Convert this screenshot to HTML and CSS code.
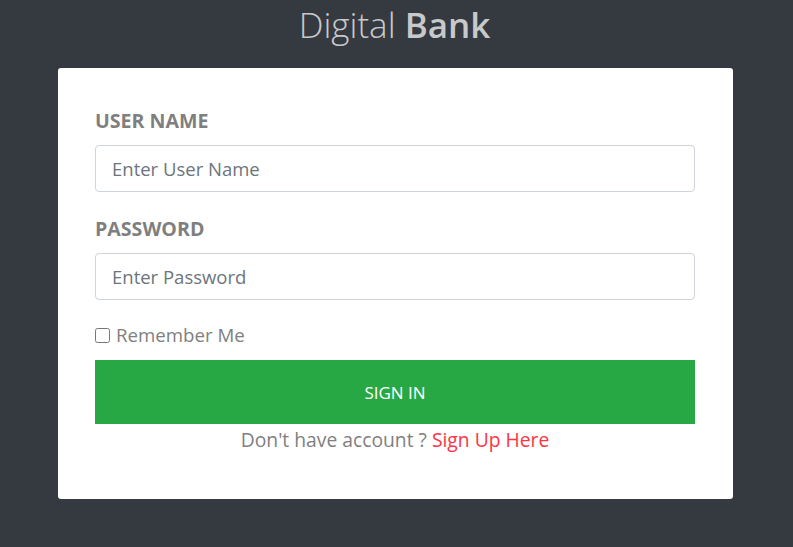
FILE: index.html
```html
<!DOCTYPE html>
<html>
<head>
<meta charset="utf-8">
<link rel="stylesheet" href="styles.css">
</head>
<body>
<div class="page">
  <h1 class="brand">Digital <b>Bank</b></h1>
  <div class="card">
    <form class="form">
      <label class="label" for="u">USER NAME</label>
      <input class="input" id="u" type="text" placeholder="Enter User Name">
      <label class="label label-2" for="p">PASSWORD</label>
      <input class="input" id="p" type="password" placeholder="Enter Password">
      <label class="remember"><input type="checkbox" class="check"> Remember Me</label>
      <button type="button" class="btn">SIGN IN</button>
      <p class="signup">Don't have account ? <a href="#" class="link">Sign Up Here</a></p>
    </form>
  </div>
</div>
</body>
</html>
```
FILE: styles.css
```css
html, body {
  margin: 0;
  padding: 0;
  background: #343a40;
  font-family: "Open Sans", "Noto Sans", sans-serif;
}
.page {
  display: flex;
  flex-direction: column;
  align-items: flex-start;
}
.brand {
  align-self: center;
  margin: 2px 4px 0 0;
  height: 66px;
  font-size: 35px;
  font-weight: 300;
  color: #c8c9cb;
  line-height: 46px;
}
.brand b {
  font-weight: 600;
}
.card {
  margin-left: 58px;
  width: 675px;
  background: #fff;
  border-radius: 3px;
  box-sizing: border-box;
  padding: 40px 38px 46px 37px;
}
.form {
  display: flex;
  flex-direction: column;
}
.label {
  font-size: 19.6px;
  font-weight: 700;
  color: #7f7f7f;
  line-height: 26px;
  margin-bottom: 11px;
}
.label-2 {
  margin-top: 24px;
}
.input {
  height: 47px;
  box-sizing: border-box;
  border: 1px solid #ced4da;
  border-radius: 4px;
  padding: 0 16px;
  font-family: inherit;
  font-size: 18.5px;
  color: #495057;
}
.input::placeholder {
  color: #6c757d;
}
.remember {
  display: flex;
  align-items: center;
  margin-top: 22px;
  font-size: 18.7px;
  color: #7f7f7f;
  line-height: 26px;
}
.check {
  margin: 0 6px 0 0;
  width: 15px;
  height: 15px;
}
.btn {
  margin-top: 12px;
  height: 64px;
  border: none;
  background: #28a745;
  color: #fff;
  font-family: inherit;
  font-size: 17px;
}
.signup {
  margin: 3px 0 0;
  text-align: center;
  font-size: 19.3px;
  color: #7f7f7f;
  line-height: 26px;
}
.link {
  color: #ff3444;
  text-decoration: none;
}
```
